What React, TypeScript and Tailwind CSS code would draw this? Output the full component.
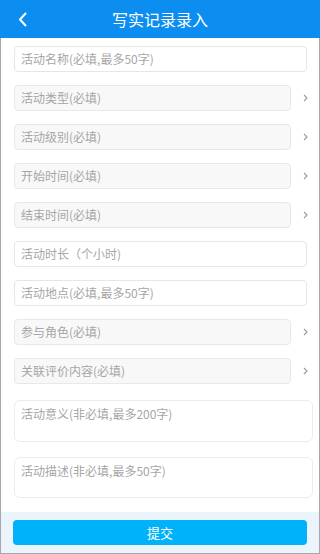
import React from "react";

const font = { fontFamily: '"Noto Sans CJK SC", "Noto Sans", sans-serif' };

function Input({ text }: { text: string }) {
  return (
    <div className="flex h-[26px] items-center">
      <div className="flex h-[26px] w-[293px] items-center rounded-[4px] border border-[#e6e6e6] bg-white pl-[6px] text-[12px] text-[#a6a6a6]">
        {text}
      </div>
    </div>
  );
}

function Select({ text }: { text: string }) {
  return (
    <div className="flex h-[26px] items-center">
      <div className="flex h-[26px] w-[277px] items-center rounded-[4px] border border-[#e8e8e8] bg-[#f8f8f8] pl-[6px] text-[12px] text-[#a6a6a6]">
        {text}
      </div>
      <div className="flex w-[17px] justify-end">
        <svg width="5" height="8" viewBox="0 0 5 8" fill="none">
          <path d="M1 1 L4 4 L1 7" stroke="#9a9a9a" strokeWidth="1.1" />
        </svg>
      </div>
    </div>
  );
}

function Area({ text, h }: { text: string; h: string }) {
  return (
    <div className={`w-[299px] rounded-[6px] border border-[#ececec] bg-white pl-[6px] pt-[4px] text-[12px] text-[#a6a6a6] ${h}`}>
      {text}
    </div>
  );
}

export default function App() {
  return (
    <div className="flex h-[554px] w-[320px] flex-col bg-white" style={font}>
      <div className="relative flex h-[38px] shrink-0 items-center justify-center bg-[#0b8ef0]">
        <svg className="absolute left-[17px] top-[12px]" width="12" height="15" viewBox="0 0 12 15" fill="none">
          <path d="M8.5 1.5 L3 7.5 L8.5 13.5" stroke="white" strokeWidth="2" strokeLinecap="round" strokeLinejoin="round" />
        </svg>
        <span className="text-[16px] leading-none text-white">写实记录录入</span>
      </div>
      <div className="flex flex-1 flex-col border-x border-b border-[#a8a8a8]">
        <div className="flex flex-1 flex-col pl-[13px] pt-[8px]">
          <div className="flex flex-col gap-[13px]">
            <Input text="活动名称(必填,最多50字)" />
            <Select text="活动类型(必填)" />
            <Select text="活动级别(必填)" />
            <Select text="开始时间(必填)" />
            <Select text="结束时间(必填)" />
            <Input text="活动时长（个小时)" />
            <Input text="活动地点(必填,最多50字)" />
            <Select text="参与角色(必填)" />
            <Select text="关联评价内容(必填)" />
          </div>
          <div className="mt-[16px] flex flex-col gap-[15px]">
            <Area text="活动意义(非必填,最多200字)" h="h-[42px]" />
            <Area text="活动描述(非必填,最多50字)" h="h-[41px]" />
          </div>
        </div>
        <div className="flex h-[41px] shrink-0 items-start bg-[#ebf3fb] pl-[12px] pt-[8px]">
          <div className="flex h-[25px] w-[294px] items-center justify-center rounded-[4px] bg-[#00b2f9] text-[13px] text-white">
            提交
          </div>
        </div>
      </div>
    </div>
  );
}
